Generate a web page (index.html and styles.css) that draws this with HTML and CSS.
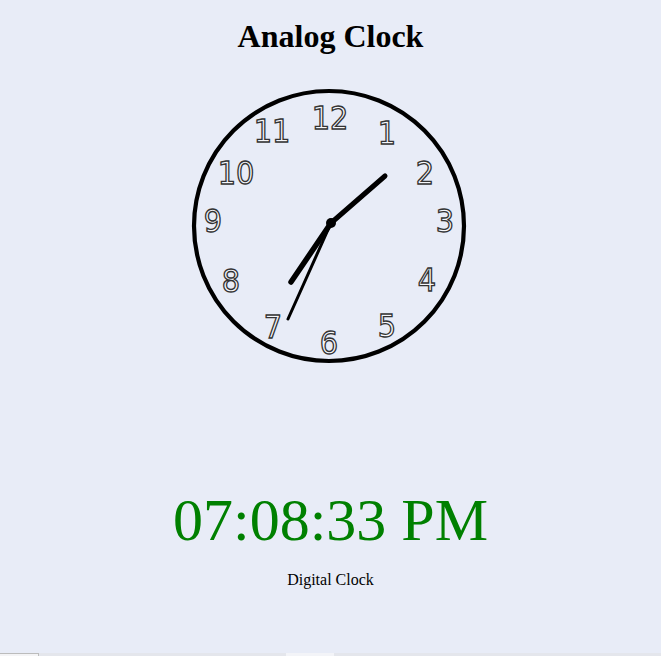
FILE: index.html
```html
<!DOCTYPE html>
<html>
<head>
<meta charset="utf-8">
<title>Analog Clock</title>
<link rel="stylesheet" href="styles.css">
</head>
<body>
<main class="page">
  <h1 class="title">Analog Clock</h1>
  <div class="clock-wrap">
    <svg class="clock" width="280" height="280" viewBox="189 86 280 280" xmlns="http://www.w3.org/2000/svg">
      <circle cx="329" cy="226" r="135" fill="none" stroke="#000" stroke-width="4.2"/>
      <g class="nums">
        <text x="330" y="128.5">12</text>
        <text x="387" y="143.5">1</text>
        <text x="425" y="183.5">2</text>
        <text x="445" y="231.5">3</text>
        <text x="427" y="290.5">4</text>
        <text x="387" y="336.5">5</text>
        <text x="329" y="353.5">6</text>
        <text x="273" y="337.5">7</text>
        <text x="231" y="291.5">8</text>
        <text x="213" y="231.5">9</text>
        <text x="236" y="183.5">10</text>
        <text x="272" y="141.5">11</text>
      </g>
      <line x1="331" y1="223" x2="385" y2="176" stroke="#000" stroke-width="5" stroke-linecap="round"/>
      <line x1="331" y1="223" x2="291" y2="282" stroke="#000" stroke-width="5.5" stroke-linecap="round"/>
      <line x1="331" y1="223" x2="288" y2="319" stroke="#000" stroke-width="3" stroke-linecap="round"/>
      <circle cx="331" cy="223" r="5" fill="#000"/>
    </svg>
  </div>
  <div class="digital">07:08:33 PM</div>
  <div class="caption">Digital Clock</div>
</main>
<footer class="footer">
  <div class="footer-left"></div>
  <div class="footer-mid"></div>
</footer>
</body>
</html>
```
FILE: styles.css
```css
html, body {
  margin: 0;
  padding: 0;
}
body {
  background: #e8ecf7;
  font-family: "Liberation Serif", "Times New Roman", serif;
  color: #000;
  width: 661px;
  height: 656px;
  overflow: hidden;
  display: flex;
  flex-direction: column;
}
.page {
  display: flex;
  flex-direction: column;
  align-items: center;
  flex: 1;
}
.title {
  margin: 18px 0 0;
  font-size: 32px;
  font-weight: bold;
  line-height: 37px;
}
.clock-wrap {
  margin-top: 31px;
  width: 280px;
  height: 280px;
  margin-left: -3px;
}
.clock {
  display: block;
}
.nums text {
  font-family: "DejaVu Sans Condensed", "DejaVu Sans", sans-serif;
  font-size: 32px;
  text-anchor: middle;
  fill: #f6f7fb;
  stroke: #333333;
  stroke-width: 1.3px;
}
.digital {
  margin-top: 120px;
  font-size: 60px;
  line-height: 69px;
  color: #008000;
}
.caption {
  margin-top: 16px;
  font-size: 16px;
  line-height: 18px;
}
.footer {
  height: 3px;
  display: flex;
  background: #e4e6ec;
}
.footer-left {
  width: 38px;
  background: #f4f4f6;
  border-top: 1px solid #bcbcbc;
  border-right: 1px solid #bcbcbc;
}
.footer-mid {
  margin-left: 247px;
  width: 48px;
  background: #f3f4f8;
}
```
